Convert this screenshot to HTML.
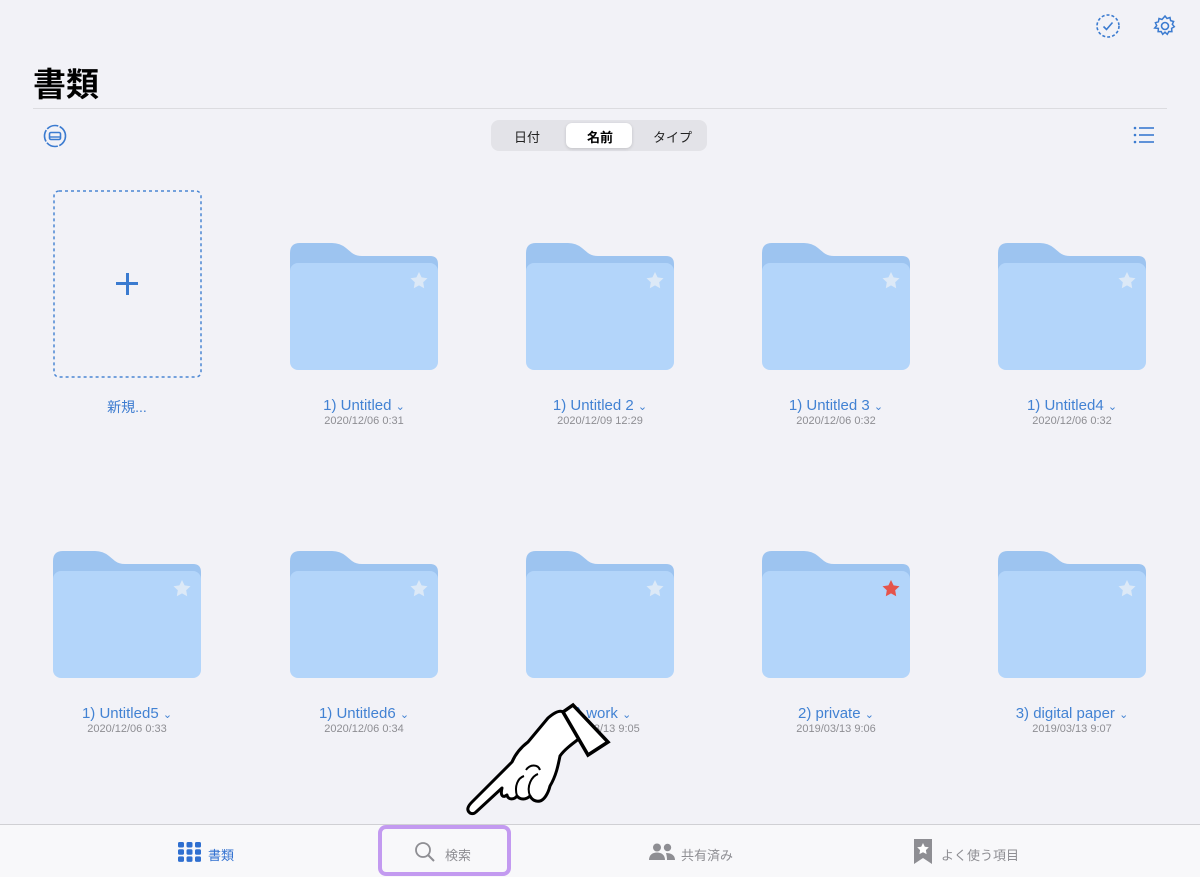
<!DOCTYPE html>
<html><head><meta charset="utf-8"><style>
*{margin:0;padding:0;box-sizing:border-box}
body{width:1200px;height:877px;background:#f2f2f7;font-family:"Liberation Sans","Noto Sans CJK JP",sans-serif;position:relative;overflow:hidden}
.abs{position:absolute}
h1{position:absolute;left:33px;top:58px;font-size:33px;font-weight:bold;color:#000;font-family:"Noto Sans CJK JP",sans-serif}
.hr{left:33px;top:108px;width:1134px;height:1px;background:#dcdce0}
.seg{left:491px;top:120px;width:216px;height:31px;background:#e3e3e8;border-radius:8px;font-size:13px;color:#222}
.seg span{position:absolute;top:7px}
.seg .on{left:75px;top:3px;width:66px;height:25px;background:#fff;border-radius:6px;box-shadow:0 1px 3px rgba(0,0,0,.15)}
.folder{position:absolute;width:148px;height:127px}
.lbl{position:absolute;width:236px;text-align:center;font-size:15px;color:#4282d3}
.date{position:absolute;width:236px;text-align:center;font-size:11px;color:#8e8e93}
.tab{left:0;top:824px;width:1200px;height:53px;background:#f8f8fa;border-top:1px solid #d0d0d4}
.ti{position:absolute;top:845px;font-size:13px;color:#8e8e93}
</style></head><body>
<svg class="abs" style="left:1095px;top:13px" width="26" height="26" viewBox="0 0 26 26"><circle cx="13" cy="13" r="11" fill="none" stroke="#3b7bd0" stroke-width="1.6" stroke-dasharray="3 2"/><path d="M8.5 13.5l3 3 6-7" fill="none" stroke="#3b7bd0" stroke-width="1.6"/></svg>
<svg class="abs" style="left:1153px;top:14px" width="24" height="24" viewBox="0 0 24 24"><circle cx="12" cy="12" r="3.5" fill="none" stroke="#3b7bd0" stroke-width="1.6"/><path d="M12 2l2 2.5 3-1 .6 3.1 3 .9-1.3 2.8 2 2.4-2.7 1.7.3 3.2-3.1-.1-1.5 2.8-2.3-2.1-2.3 2.1-1.5-2.8-3.1.1.3-3.2L1.7 14l2-2.4L2.4 8.7l3-.9L6 4.5l3 1z" fill="none" stroke="#3b7bd0" stroke-width="1.5"/></svg>
<h1>書類</h1>
<div class="abs hr"></div>
<svg class="abs" style="left:43px;top:124px" width="24" height="24" viewBox="0 0 24 24"><circle cx="12" cy="12" r="10.5" fill="none" stroke="#3b7bd0" stroke-width="1.6" stroke-dasharray="12 1.5"/><rect x="6.5" y="8.5" width="11" height="7" rx="1.5" fill="none" stroke="#3b7bd0" stroke-width="1.6"/><line x1="6.5" y1="13" x2="17.5" y2="13" stroke="#3b7bd0" stroke-width="1.4"/></svg>
<div class="abs seg"><div class="abs on"></div><span style="left:23px">日付</span><span style="left:96px;font-weight:bold;color:#000">名前</span><span style="left:162px">タイプ</span></div>
<svg class="abs" style="left:1133px;top:126px" width="22" height="18" viewBox="0 0 22 18"><g fill="#3b7bd0"><circle cx="2" cy="2" r="1.3"/><circle cx="2" cy="9" r="1.3"/><circle cx="2" cy="16" r="1.3"/><rect x="6" y="1.2" width="15" height="1.6"/><rect x="6" y="8.2" width="15" height="1.6"/><rect x="6" y="15.2" width="15" height="1.6"/></g></svg>
<svg class="abs" style="left:53px;top:190px" width="149" height="188"><rect x="1" y="1" width="147" height="186" rx="5" fill="none" stroke="#4a86d4" stroke-width="1.5" stroke-dasharray="3 3"/></svg>
<div class="abs" style="left:116px;top:282px;width:22px;height:3px;background:#3b7bd0"></div>
<div class="abs" style="left:125.5px;top:273px;width:3px;height:22px;background:#3b7bd0"></div>
<div class="abs" style="left:9px;top:397px;width:236px;text-align:center;font-size:14px;color:#3b7bd0">新規...</div>

<svg width="0" height="0" style="position:absolute"><defs>
<symbol id="f" viewBox="0 0 148 127"><path d="M0 10 Q0 0 10 0 H42 Q50 0 56 5 L62 10 Q66 13 72 13 H140 Q148 13 148 21 V40 H0z" fill="#9dc4f0"/><rect x="0" y="20" width="148" height="107" rx="8" fill="#b3d5fa"/></symbol>
</defs></svg>
<div id="g"></div>
<script>
var xs=[53,290,526,762,998];
var r1=[null,["1) Untitled","2020/12/06 0:31"],["1) Untitled 2","2020/12/09 12:29"],["1) Untitled 3","2020/12/06 0:32"],["1) Untitled4","2020/12/06 0:32"]];
var r2=[["1) Untitled5","2020/12/06 0:33"],["1) Untitled6","2020/12/06 0:34"],["1) work","2019/03/13 9:05"],["2) private","2019/03/13 9:06"],["3) digital paper","2019/03/13 9:07"]];
var h="";
function add(i,y,d,red){if(!d)return;var x=xs[i];
h+='<svg class="folder" style="left:'+x+'px;top:'+y+'px" viewBox="0 0 148 127"><use href="#f"/><path d="M129 29l2.6 5.4 5.9.8-4.3 4.1 1 5.9-5.2-2.8-5.2 2.8 1-5.9-4.3-4.1 5.9-.8z" fill="'+(red?'#e5544b':'#dce9f7')+'"/></svg>';
h+='<div class="lbl" style="left:'+(x-44)+'px;top:'+(y+154)+'px">'+d[0]+' <span style="font-size:11px">&#8964;</span></div>';
h+='<div class="date" style="left:'+(x-44)+'px;top:'+(y+172)+'px">'+d[1]+'</div>';}
for(var i=0;i<5;i++){add(i,243,r1[i]);add(i,551,r2[i],i==3);}
document.getElementById("g").innerHTML=h;
</script>
<div class="abs tab"></div>
<svg class="abs" style="left:178px;top:842px" width="23" height="20" viewBox="0 0 23 20"><g fill="#2f6fd0"><rect x="0" y="0" width="6" height="5.5" rx="1.5"/><rect x="8.5" y="0" width="6" height="5.5" rx="1.5"/><rect x="17" y="0" width="6" height="5.5" rx="1.5"/><rect x="0" y="7.2" width="6" height="5.5" rx="1.5"/><rect x="8.5" y="7.2" width="6" height="5.5" rx="1.5"/><rect x="17" y="7.2" width="6" height="5.5" rx="1.5"/><rect x="0" y="14.4" width="6" height="5.5" rx="1.5"/><rect x="8.5" y="14.4" width="6" height="5.5" rx="1.5"/><rect x="17" y="14.4" width="6" height="5.5" rx="1.5"/></g></svg>
<div class="ti" style="left:208px;color:#2f6fd0">書類</div>
<svg class="abs" style="left:414px;top:841px" width="22" height="22" viewBox="0 0 22 22"><circle cx="9" cy="9" r="7" fill="none" stroke="#8e8e93" stroke-width="1.8"/><line x1="14" y1="14" x2="20" y2="20" stroke="#8e8e93" stroke-width="2"/></svg>
<div class="ti" style="left:445px">検索</div>
<svg class="abs" style="left:649px;top:843px" width="26" height="18" viewBox="0 0 26 18"><g fill="#8e8e93"><circle cx="8" cy="4.5" r="4"/><path d="M0 17c0-5 3.5-7.5 8-7.5s8 2.5 8 7.5z"/><circle cx="18.5" cy="4.5" r="3.7"/><path d="M17 10c5 0 9 2 9 7h-8c0-3-.5-5-1-7z"/></g></svg>
<div class="ti" style="left:681px">共有済み</div>
<svg class="abs" style="left:914px;top:839px" width="18" height="25" viewBox="0 0 18 25"><path d="M0 0h18v25l-9-6-9 6z" fill="#8e8e93"/><path d="M9 4l1.8 3.7 4 .6-2.9 2.8.7 4L9 13.2 5.4 15.1l.7-4-2.9-2.8 4-.6z" fill="#fff"/></svg>
<div class="ti" style="left:941px">よく使う項目</div>
<div class="abs" style="left:378px;top:825px;width:133px;height:51px;border:4px solid #c39af0;border-radius:8px"></div>
<svg class="abs" style="left:460px;top:700px" width="155" height="120" viewBox="0 0 155 120"><path d="M10 113 C6 110 8 106 12 102 L52 62 C55 55 60 48 68 42 L88 18 C95 12 100 10 103 12 L120 38 C112 44 104 50 100 56 C98 66 96 76 90 86 C88 94 84 100 80 101 C76 102 72 100 70 96 C66 100 60 100 57 96 C54 100 48 100 47 95 C43 98 40 96 42 88 L16 112 C14 114 12 114 10 113z" fill="#fff" stroke="#000" stroke-width="3" stroke-linejoin="round"/><path d="M103 12 L113 5 L148 42 L128 55 Z" fill="#fff" stroke="#000" stroke-width="3.5"/><path d="M66 70 C70 64 78 64 80 70 M70 96 C66 86 72 76 78 74 M57 96 C54 86 58 78 64 76" fill="none" stroke="#000" stroke-width="2"/></svg>
</body></html>
